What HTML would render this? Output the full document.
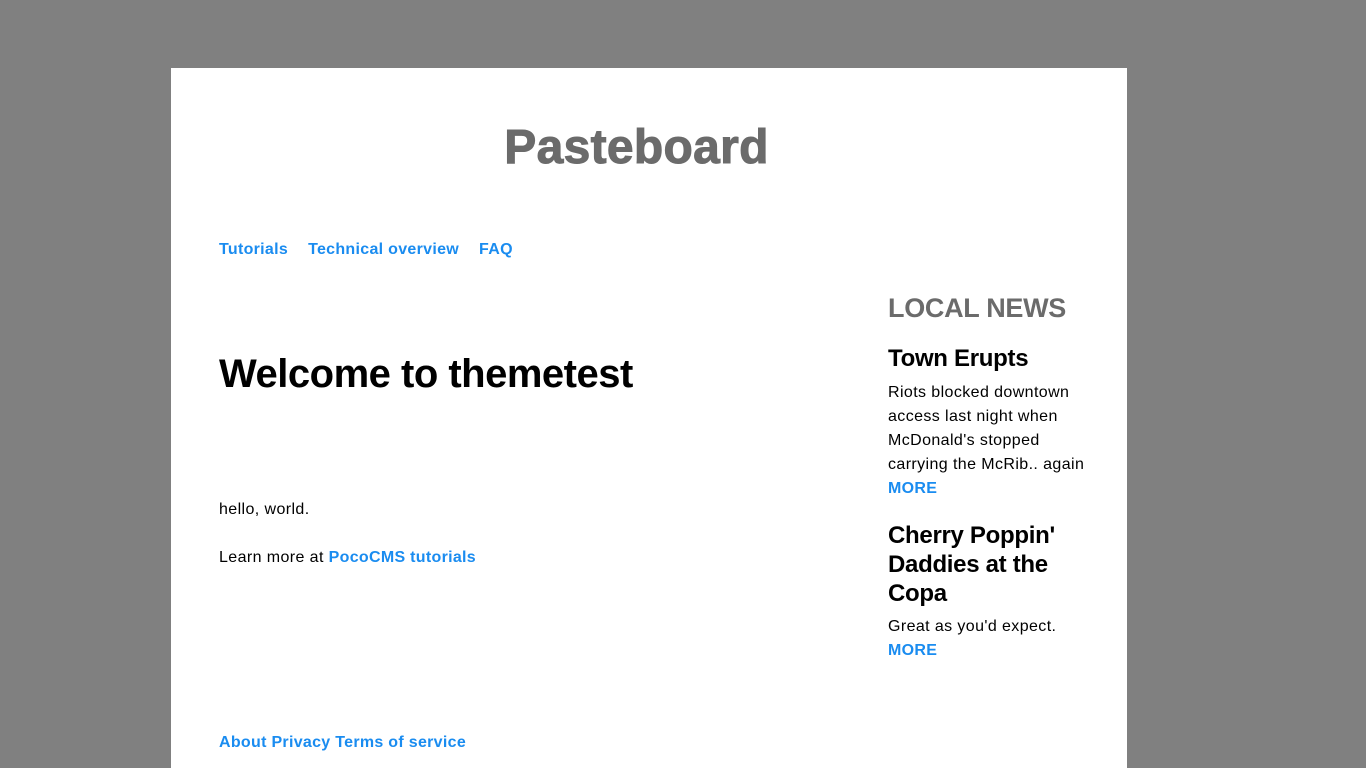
<!DOCTYPE html>
<html><head><meta charset="utf-8"><style>
body{margin:0;background:#808080;width:1366px;height:768px;overflow:hidden;font-family:"Liberation Sans",sans-serif;}
.panel{position:absolute;left:171px;top:68px;width:956px;height:700px;background:#fff;}
.a{position:absolute;white-space:nowrap;}
.b{color:#1a8cf0;font-weight:bold;font-size:16px;letter-spacing:0.3px}
.t{letter-spacing:0.4px}
</style></head><body>
<div class="panel"></div>
<div class="a" style="left:0;width:1273px;text-align:center;top:120px;font-size:48px;line-height:56px;font-weight:900;color:#6b6b6b;letter-spacing:0.3px;-webkit-text-stroke:1px #6b6b6b">Pasteboard</div>
<div class="a b" style="left:219px;top:240px;line-height:20px">Tutorials<span style="margin-left:20px">Technical overview</span><span style="margin-left:20px">FAQ</span></div>
<div class="a" style="left:219px;top:350px;font-size:40px;line-height:48px;font-weight:bold;color:#000;letter-spacing:-0.5px">Welcome to themetest</div>
<div class="a t" style="left:219px;top:500px;font-size:16px;line-height:20px;color:#000">hello, world.</div>
<div class="a t" style="left:219px;top:548px;font-size:16px;line-height:20px;color:#000">Learn more at <span class="b">PocoCMS tutorials</span></div>
<div class="a" style="left:888px;top:292px;font-size:27px;line-height:32px;font-weight:bold;color:#6b6b6b;letter-spacing:-0.3px">LOCAL NEWS</div>
<div class="a" style="left:888px;top:344px;font-size:24px;line-height:30px;font-weight:bold;color:#000;letter-spacing:-0.3px">Town Erupts</div>
<div class="a t" style="left:888px;top:381px;font-size:16px;line-height:24px;color:#000">Riots blocked downtown<br>access last night when<br>McDonald's stopped<br>carrying the McRib.. again<br><span class="b">MORE</span></div>
<div class="a" style="left:888px;top:521px;font-size:24px;line-height:29px;font-weight:bold;color:#000;letter-spacing:-0.3px">Cherry Poppin'<br>Daddies at the<br>Copa</div>
<div class="a t" style="left:888px;top:615px;font-size:16px;line-height:24px;color:#000">Great as you'd expect.<br><span class="b">MORE</span></div>
<div class="a b" style="left:219px;top:733px;line-height:20px">About Privacy Terms of service</div>
</body></html>
